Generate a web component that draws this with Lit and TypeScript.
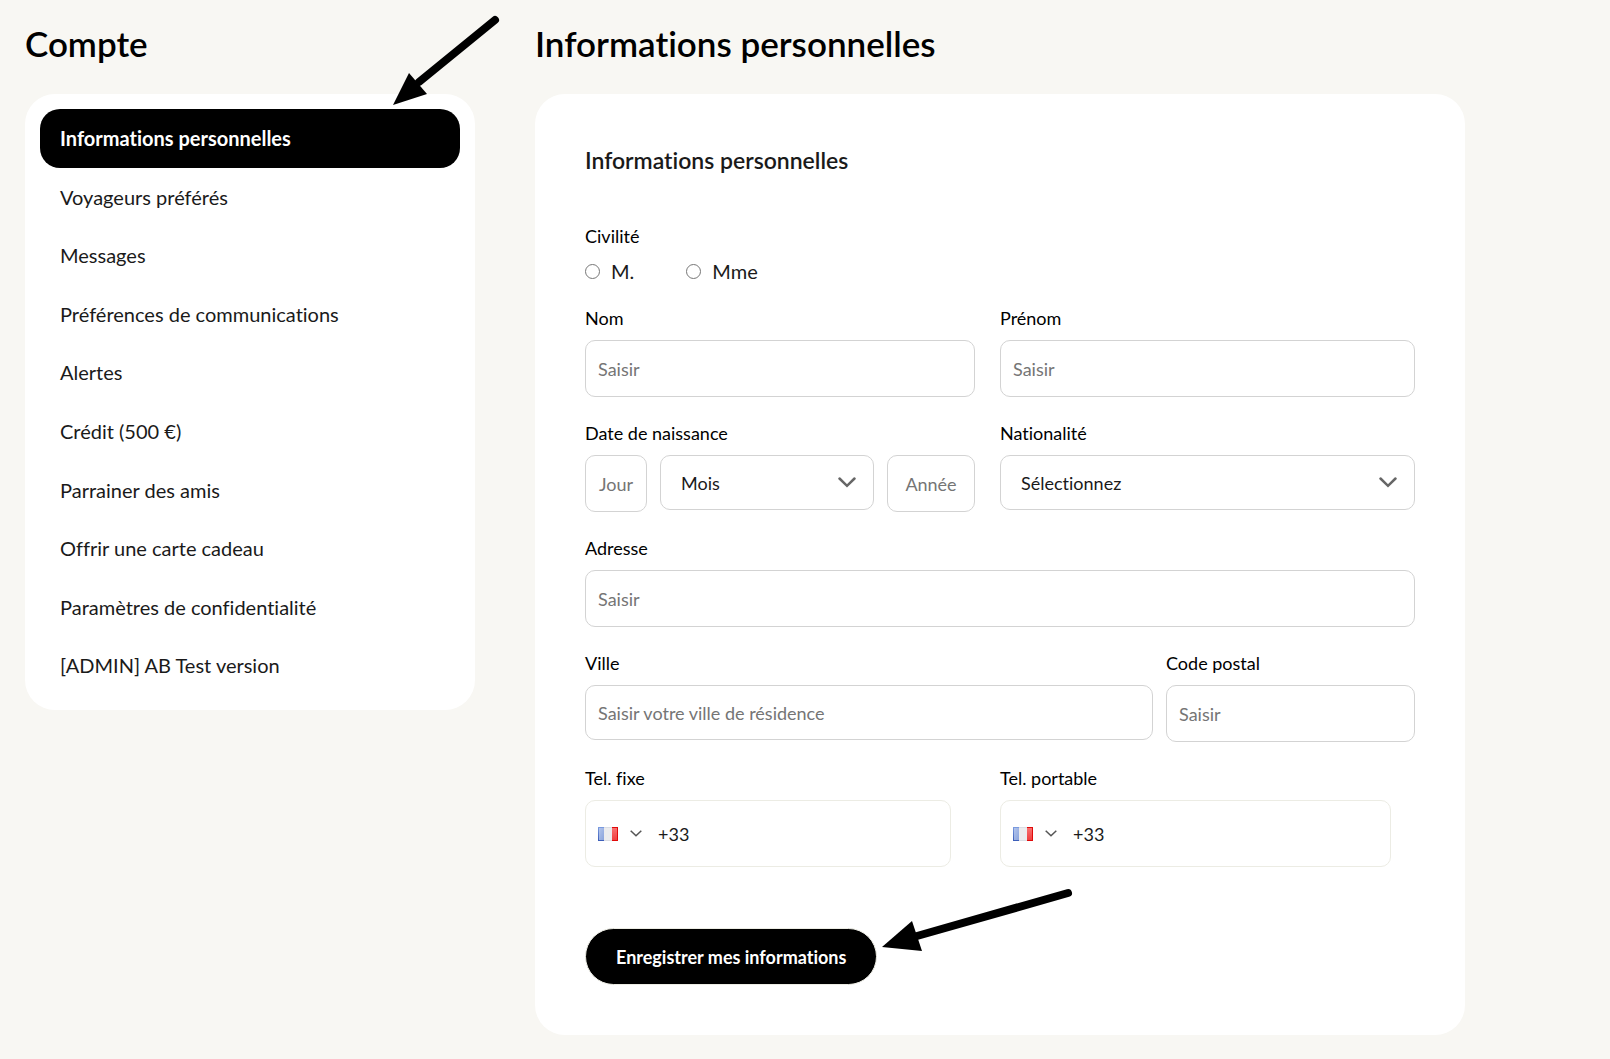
import { LitElement, html, css } from "lit";
import { customElement, state } from "lit/decorators.js";
import { classMap } from "lit/directives/class-map.js";

const MENU = [
  "Informations personnelles",
  "Voyageurs préférés",
  "Messages",
  "Préférences de communications",
  "Alertes",
  "Crédit (500 €)",
  "Parrainer des amis",
  "Offrir une carte cadeau",
  "Paramètres de confidentialité",
  "[ADMIN] AB Test version",
];

const MONTHS = [
  "Janvier", "Février", "Mars", "Avril", "Mai", "Juin", "Juillet",
  "Août", "Septembre", "Octobre", "Novembre", "Décembre",
];

const chevron = html`<svg class="chevron" viewBox="0 0 18 11" aria-hidden="true">
  <path d="M1.5 1.5 L9 8.8 L16.5 1.5" />
</svg>`;

const smallChevron = html`<svg class="small-chevron" viewBox="0 0 12 7" aria-hidden="true">
  <path d="M0.7 0.7 L6 5.8 L11.3 0.7" />
</svg>`;

const flag = html`<svg class="flag" viewBox="0 0 20 14" aria-hidden="true">
  <defs>
    <linearGradient id="blue" x1="0" y1="0" x2="0" y2="1">
      <stop offset="0" stop-color="#7c9ce0" />
      <stop offset="1" stop-color="#3a5cb8" />
    </linearGradient>
    <linearGradient id="blue-inner" x1="0" y1="0" x2="1" y2="1">
      <stop offset="0" stop-color="#b3c5ec" />
      <stop offset="1" stop-color="#8ba4dc" />
    </linearGradient>
    <linearGradient id="red-inner" x1="0" y1="0" x2="0" y2="1">
      <stop offset="0" stop-color="#f87070" />
      <stop offset="1" stop-color="#f04040" />
    </linearGradient>
  </defs>
  <rect width="6" height="14" fill="url(#blue)" />
  <rect x="1" y="1" width="5" height="12" fill="url(#blue-inner)" />
  <rect x="6" width="8" height="14" fill="#dadde4" />
  <rect x="6" y="1" width="8" height="12" fill="#ececee" />
  <rect x="14" width="6" height="14" fill="#e00a0a" />
  <rect x="14" y="1" width="5" height="12" fill="url(#red-inner)" />
</svg>`;

@customElement("app-root")
export class AppRoot extends LitElement {
  static styles = css`
    :host {
      display: block;
      min-height: 100vh;
      box-sizing: border-box;
      background: #f8f7f3;
      color: #000;
      font-family: Lato, "Liberation Sans", sans-serif;
      font-size: 18px;
      line-height: 24px;
      font-variant-ligatures: none;
    }
    *, *::before, *::after { box-sizing: border-box; }
    .page {
      display: grid;
      grid-template-columns: minmax(0, 450fr) minmax(0, 930fr);
      column-gap: 60px;
      align-items: start;
      max-width: 1490px;
      padding: 21px 25px;
    }
    .title {
      margin: 0 0 29px;
      font-size: 35px;
      line-height: 44px;
      font-weight: 600;
    }
    .card { background: #fff; border-radius: 30px; }
    .menu {
      margin: 0;
      padding: 15px;
      list-style: none;
      font-size: 20px;
      line-height: 1.43;
    }
    .entry { position: relative; }
    .link {
      display: block;
      padding: 15px 20px;
      border-radius: 20px;
      color: #1a1a1a;
      text-decoration: none;
    }
    .link.active { background: #000; color: #fff; font-weight: 700; }
    .arrow {
      position: absolute;
      pointer-events: none;
      fill: #000;
      overflow: visible;
    }
    .arrow line { stroke: #000; stroke-width: 8; stroke-linecap: round; }
    .arrow-menu { right: -45px; bottom: 58px; width: 120px; height: 100px; }
    .arrow-save { left: 100%; top: -45px; width: 200px; height: 80px; }

    .form { padding: 50px; }
    .subtitle {
      margin: 0 0 47px;
      font-size: 23px;
      line-height: 33px;
      font-weight: 600;
      color: #1a1a1a;
    }
    .civility { margin: 0 0 23px; padding: 0; border: 0; }
    .legend { padding: 0; margin-bottom: 11px; }
    .radios { display: flex; gap: 52px; font-size: 20px; color: #1a1a1a; }
    .radio { display: flex; align-items: center; gap: 11px; }
    .radio input { width: 15px; height: 15px; margin: 0; }
    .row { display: grid; grid-template-columns: 1fr 1fr; min-height: 115px; align-items: start; }
    .row.single { grid-template-columns: 1fr; }
    .row.city { grid-template-columns: 7fr 3fr; }
    .field { display: grid; gap: 10px; min-width: 0; margin: 0; padding: 0; border: 0; }
    .field.spaced { padding-right: 25px; }
    .field.narrow { padding-right: 13px; }
    .input, .select {
      width: 100%;
      min-width: 0;
      height: 57px;
      padding: 0 12px;
      border: 1px solid #d3d3d3;
      border-radius: 10px;
      background: #fff;
      color: #1a1a1a;
      font: inherit;
    }
    .input::placeholder { color: #757575; opacity: 1; }
    .input.centered { text-align: center; padding: 0; }
    .input.short { height: 55px; }
    .select { height: 55px; padding: 0 50px 0 20px; appearance: none; }
    .select-box { position: relative; }
    .chevron {
      position: absolute;
      right: 18px;
      top: 22px;
      width: 18px;
      height: 11px;
      pointer-events: none;
    }
    .chevron path { fill: none; stroke: #666; stroke-width: 2.5; stroke-linecap: round; }
    .birth { display: grid; grid-template-columns: 62px minmax(0, 1fr) 88px; gap: 13px; align-items: start; }
    .phone-pad { padding-right: 24px; }
    .phone {
      display: flex;
      align-items: center;
      height: 67px;
      padding-left: 12px;
      border: 1px solid #ecece4;
      border-radius: 10px;
    }
    .country {
      display: flex;
      align-items: center;
      gap: 12px;
      padding: 0;
      border: 0;
      background: none;
    }
    .flag { width: 20px; height: 14px; }
    .small-chevron { width: 12px; height: 7px; }
    .small-chevron path { fill: none; stroke: #555; stroke-width: 1.5; }
    .number {
      flex: 1;
      min-width: 0;
      height: 100%;
      padding: 0 16px;
      border: 0;
      border-radius: 10px;
      background: none;
      color: #1a1a1a;
      font: inherit;
    }
    .actions { position: relative; width: fit-content; margin-top: 47px; }
    .save {
      display: block;
      height: 57px;
      padding: 0 30px;
      border: 1px solid #ecece4;
      border-radius: 29px;
      background: #000;
      color: #fff;
      font: inherit;
      font-weight: 700;
    }
  `;

  @state() private active = 0;

  private pick(event: Event, index: number) {
    event.preventDefault();
    this.active = index;
  }

  private phone(id: string, label: string, spaced: boolean) {
    return html`<div class=${classMap({ field: true, spaced })}>
      <label for=${id}>${label}</label>
      <div class="phone-pad">
        <div class="phone">
          <button class="country" type="button" aria-label="France">${flag}${smallChevron}</button>
          <input class="number" id=${id} type="tel" value="+33" />
        </div>
      </div>
    </div>`;
  }

  render() {
    return html`
      <div class="page">
        <nav aria-labelledby="account">
          <h1 class="title" id="account">Compte</h1>
          <ul class="card menu">
            ${MENU.map(
              (item, i) => html`<li class="entry">
                <a
                  class=${classMap({ link: true, active: i === this.active })}
                  href="#"
                  @click=${(e: Event) => this.pick(e, i)}
                  >${item}</a
                >
                ${i === 0
                  ? html`<svg class="arrow arrow-menu" viewBox="0 0 120 100" aria-hidden="true">
                      <line x1="110" y1="10" x2="34" y2="72" />
                      <path d="M8 95 L24 63 L42 84 Z" />
                    </svg>`
                  : null}
              </li>`
            )}
          </ul>
        </nav>
        <main>
          <h1 class="title">Informations personnelles</h1>
          <form class="card form" @submit=${(e: Event) => e.preventDefault()}>
            <h2 class="subtitle">Informations personnelles</h2>
            <fieldset class="civility">
              <legend class="legend">Civilité</legend>
              <div class="radios">
                <label class="radio"><input type="radio" name="civility" value="m" />M.</label>
                <label class="radio"><input type="radio" name="civility" value="mme" />Mme</label>
              </div>
            </fieldset>
            <div class="row">
              <div class="field spaced">
                <label for="last">Nom</label>
                <input class="input" id="last" placeholder="Saisir" />
              </div>
              <div class="field">
                <label for="first">Prénom</label>
                <input class="input" id="first" placeholder="Saisir" />
              </div>
            </div>
            <div class="row">
              <div class="field spaced" role="group" aria-labelledby="birth">
                <label id="birth" for="day">Date de naissance</label>
                <div class="birth">
                  <input class="input centered" id="day" placeholder="Jour" />
                  <div class="select-box">
                    <select class="select" aria-label="Mois">
                      <option>Mois</option>
                      ${MONTHS.map((m) => html`<option>${m}</option>`)}
                    </select>
                    ${chevron}
                  </div>
                  <input class="input centered" aria-label="Année" placeholder="Année" />
                </div>
              </div>
              <div class="field">
                <label for="nationality">Nationalité</label>
                <div class="select-box">
                  <select class="select" id="nationality">
                    <option>Sélectionnez</option>
                    <option>Française</option>
                  </select>
                  ${chevron}
                </div>
              </div>
            </div>
            <div class="row single">
              <div class="field">
                <label for="address">Adresse</label>
                <input class="input" id="address" placeholder="Saisir" />
              </div>
            </div>
            <div class="row city">
              <div class="field narrow">
                <label for="city">Ville</label>
                <input class="input short" id="city" placeholder="Saisir votre ville de résidence" />
              </div>
              <div class="field">
                <label for="zip">Code postal</label>
                <input class="input" id="zip" placeholder="Saisir" />
              </div>
            </div>
            <div class="row">
              ${this.phone("landline", "Tel. fixe", true)}
              ${this.phone("mobile", "Tel. portable", false)}
            </div>
            <div class="actions">
              <button class="save" type="submit">Enregistrer mes informations</button>
              <svg class="arrow arrow-save" viewBox="0 0 200 80" aria-hidden="true">
                <line x1="191" y1="10" x2="40" y2="53" />
                <path d="M5 64 L35 38 L45 68 Z" />
              </svg>
            </div>
          </form>
        </main>
      </div>
    `;
  }
}
